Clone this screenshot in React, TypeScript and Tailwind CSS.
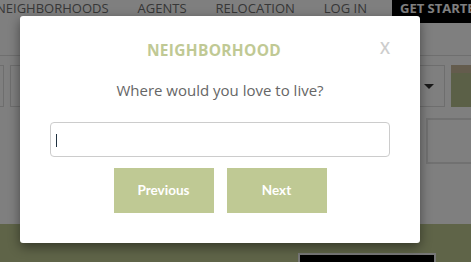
import { useState } from 'react'

const NAV = ['NEIGHBORHOODS', 'AGENTS', 'RELOCATION', 'LOG IN']

function Page() {
  return (
    <div className="flex h-full flex-col">
      <nav className="flex h-[23px] shrink-0 items-start whitespace-nowrap">
        <div className="-ml-[4px] flex shrink-0 gap-[29px] pt-[1px] text-[13px] leading-[15px] text-[#6e6e6e]">
          {NAV.map((n) => (
            <span key={n}>{n}</span>
          ))}
        </div>
        <div className="ml-[25px] flex h-[23px] flex-1 items-start overflow-hidden bg-black pl-[8px] pt-[1px] text-[13px] font-bold leading-[15px] text-white">
          GET STARTED
        </div>
      </nav>
      <div className="h-[33px] shrink-0 border-b border-[#dedede]" />
      <div className="flex h-[52px] shrink-0 items-start gap-[6px] pt-[9px]">
        <div className="h-[42px] w-[4px] border border-l-0 border-[#dcdcdc]" />
        <div className="h-[42px] w-[12px] border border-[#dcdcdc]" />
        <div className="flex-1" />
        <div className="flex h-[42px] w-[32px] items-center justify-center border border-[#dcdcdc]">
          <div className="h-0 w-0 border-x-[5px] border-t-[5px] border-x-transparent border-t-[#333]" />
        </div>
        <div className="flex h-[42px] w-[20px] flex-col">
          <div className="h-[8px] bg-[#c9b89a]" />
          <div className="flex-1 bg-[#b7c08f]" />
        </div>
      </div>
      <div className="flex flex-1 flex-col">
        <div className="flex justify-end">
          <div className="mt-[10px] h-[46px] w-[45px] border-2 border-r-0 border-[#e2e2e2]" />
        </div>
        <div className="flex-1" />
      </div>
      <div className="relative h-[38px] shrink-0 bg-[#bec890]">
        <div className="absolute left-[298px] top-[29px] h-[20px] w-[138px] border-2 border-[#eeeeee] bg-black" />
      </div>
    </div>
  )
}

export default function App() {
  const [value, setValue] = useState('')

  return (
    <div className="relative h-[262px] w-[471px] overflow-hidden bg-white font-['Open_Sans',sans-serif]">
      <Page />
      <div className="absolute inset-0 bg-black/50" />
      <div className="absolute left-[20px] top-[16px] flex h-[227px] w-[400px] flex-col items-center rounded-[3px] bg-white shadow-[0_4px_12px_rgba(0,0,0,0.45)]">
        <div className="relative mt-[24px] flex w-full justify-center">
          <h2 className="-ml-[12px] text-[15.5px] font-bold leading-[20px] tracking-[0.3px] text-[#c0c994]">
            NEIGHBORHOOD
          </h2>
          <button className="absolute right-[30px] top-[-2px] text-[16px] font-semibold leading-[20px] text-[#cdcdcd]">
            X
          </button>
        </div>
        <p className="mt-[20px] text-[15px] leading-[20px] text-[#666666]">Where would you love to live?</p>
        <div className="relative mt-[22px]">
          <input
            autoFocus
            value={value}
            onChange={(e) => setValue(e.target.value)}
            className="h-[35px] w-[340px] rounded-[4px] border border-[#cccccc] px-[6px] text-[14px] text-[#333] caret-[#1f3140] outline-none"
          />
          {value === '' && (
            <span className="pointer-events-none absolute left-[6px] top-[12px] h-[13px] w-px bg-[#1f3140]" />
          )}
        </div>
        <div className="mt-[11px] flex gap-[13px]">
          <button className="h-[45px] w-[100px] bg-[#bfc994] font-['Lato',sans-serif] text-[13.5px] font-bold text-white">
            Previous
          </button>
          <button className="h-[45px] w-[100px] bg-[#bfc994] font-['Lato',sans-serif] text-[13.5px] font-bold text-white">
            Next
          </button>
        </div>
      </div>
    </div>
  )
}
